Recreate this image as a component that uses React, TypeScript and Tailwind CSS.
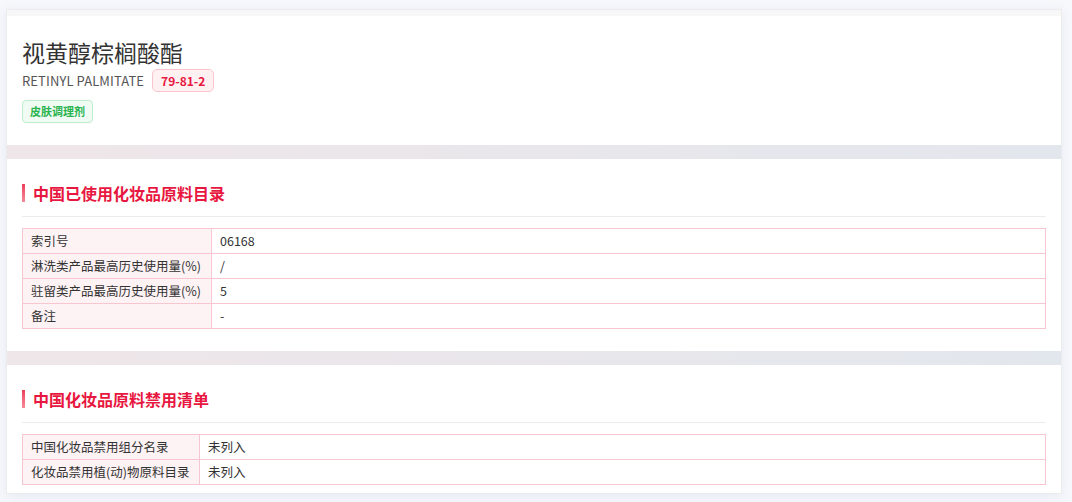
import React from "react";

const font = { fontFamily: '"Noto Sans CJK SC", "Noto Sans", sans-serif' };

function Section({ title, rows, labelW, pb }: { title: string; rows: [string, string][]; labelW: string; pb: string }) {
  return (
    <div className={`bg-white px-[15px] pt-[24px] ${pb}`}>
      <div className="flex items-center h-[20px]">
        <div className="w-[3px] h-[18px] bg-gradient-to-b from-[#ec3b5a] to-[#f58a9c]" />
        <div className="ml-[8px] text-[16px] font-bold text-[#e8173f] leading-[20px]">{title}</div>
      </div>
      <div className="mt-[13px] h-px bg-[#ececec]" />
      <div className="mt-[11px] border border-[#f7c6d1] text-[12.5px] text-[#333]">
        {rows.map(([k, v], i) => (
          <div key={k} className={`flex ${i < rows.length - 1 ? "h-[25px] border-b border-[#f7c6d1]" : "h-[24px]"}`}>
            <div className={`${labelW} shrink-0 whitespace-nowrap border-r border-[#f7c6d1] bg-[#fdf2f4] pl-[8px] leading-[24px]`}>{k}</div>
            <div className="px-[8px] whitespace-nowrap leading-[24px]">{v}</div>
          </div>
        ))}
      </div>
    </div>
  );
}

export default function App() {
  return (
    <div className="min-h-[502px] bg-[#f7f8fc] pt-[9px] px-[6px]" style={font}>
      <div className="w-[1056px] border border-[#ececec] shadow-[0_2px_10px_rgba(200,210,230,0.35)] flex flex-col">
        <div className="h-[6px] bg-[#f8f7f7]" />
        <div className="bg-white h-[129px] px-[15px] pt-[21px]">
          <div className="text-[23px] leading-[30px] text-[#333]">视黄醇棕榈酸酯</div>
          <div className="mt-[2px] flex items-center">
            <span className="text-[13px] text-[#555] leading-[20px] tracking-[0.1px]">RETINYL PALMITATE</span>
            <span className="ml-[8px] h-[23px] px-[8px] flex items-center rounded-[5px] border border-[#fbc5ce] bg-[#fff0f2] text-[12px] font-bold text-[#e8173f]">79-81-2</span>
          </div>
          <div className="mt-[8px] flex">
            <span className="h-[23px] px-[7px] flex items-center rounded-[4px] border border-[#bfeccb] bg-[#f0fbf3] text-[11px] font-bold text-[#2bb34f]">皮肤调理剂</span>
          </div>
        </div>
        <div className="h-[14px] bg-gradient-to-r from-[#efe6e9] to-[#e2e7ed]" />
        <Section
          title="中国已使用化妆品原料目录"
          labelW="w-[189px]"
          pb="pb-[22px]"
          rows={[
            ["索引号", "06168"],
            ["淋洗类产品最高历史使用量(%)", "/"],
            ["驻留类产品最高历史使用量(%)", "5"],
            ["备注", "-"],
          ]}
        />
        <div className="h-[14px] bg-gradient-to-r from-[#efe6e9] to-[#e2e7ed]" />
        <Section
          title="中国化妆品原料禁用清单"
          labelW="w-[177px]"
          pb="pb-[8px]"
          rows={[
            ["中国化妆品禁用组分名录", "未列入"],
            ["化妆品禁用植(动)物原料目录", "未列入"],
          ]}
        />
      </div>
    </div>
  );
}
